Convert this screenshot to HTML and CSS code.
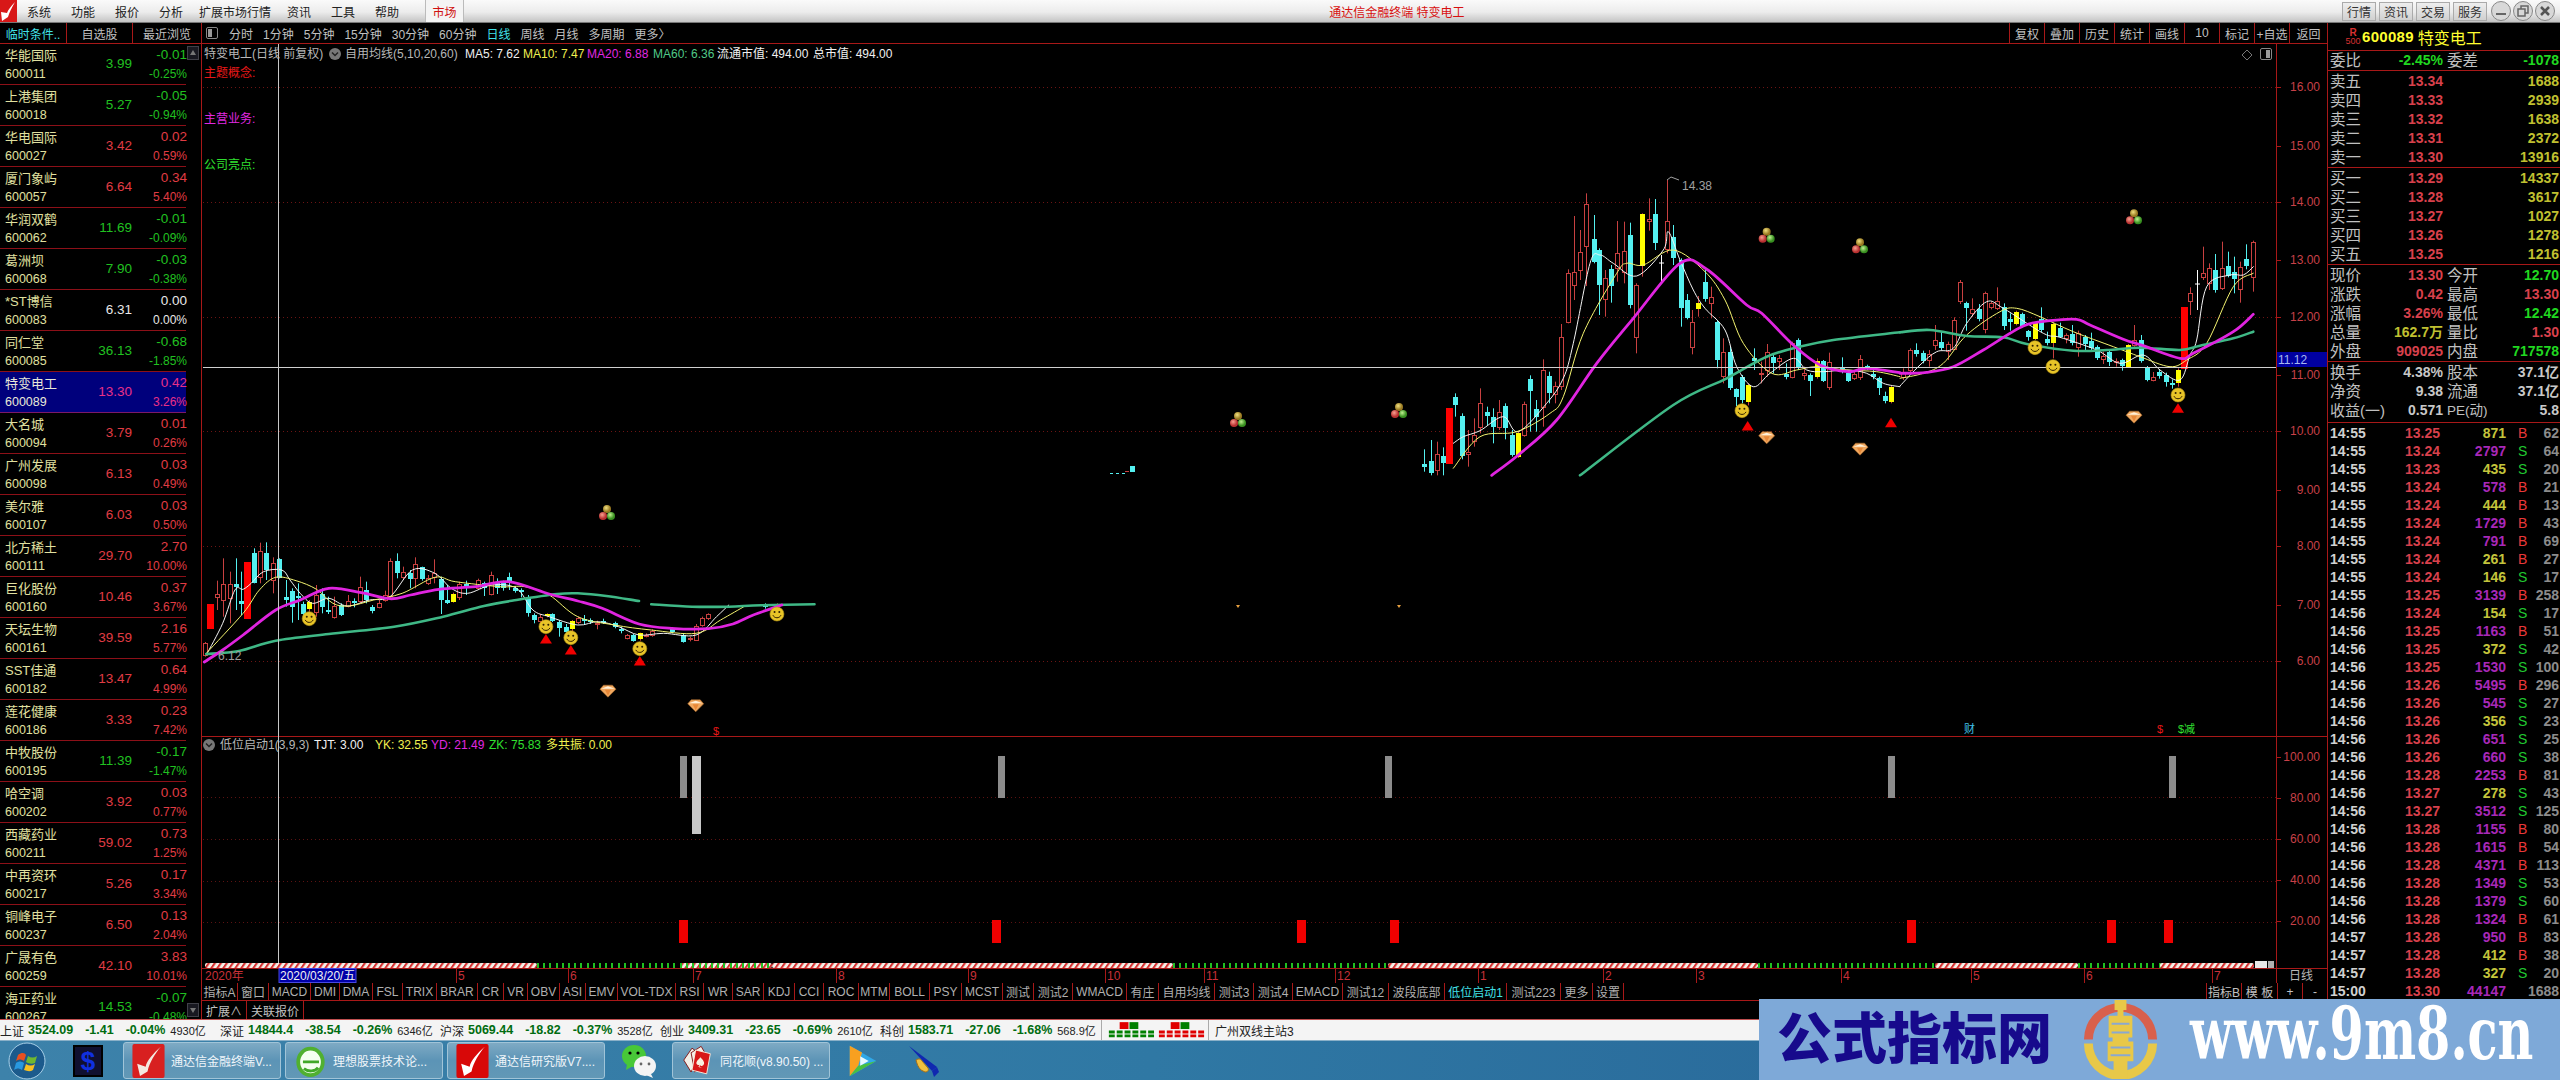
FILE: index.html
```html
<!DOCTYPE html>
<html lang="zh-CN">
<head>
<meta charset="utf-8">
<title>通达信金融终端 特变电工</title>
<link rel="stylesheet" href="styles.css">
</head>
<body>
<div class="app">
  <header class="titlebar">
    <svg class="logo" viewBox="0 0 17 22"><rect width="17" height="22" fill="#d81818"/><path d="M15 2 C11 6 8 10 7 13 L1 12 L2 21 L8 17 C9 13 12 7 15 2Z" fill="#fff"/></svg>
    <nav class="menu"><span>系统</span><span>功能</span><span>报价</span><span>分析</span><span>扩展市场行情</span><span>资讯</span><span>工具</span><span>帮助</span></nav>
    <span class="market-tab">市场</span>
    <span class="app-title">通达信金融终端 特变电工</span>
    <div class="title-right">
      <span class="tbtn">行情</span><span class="tbtn">资讯</span><span class="tbtn">交易</span><span class="tbtn">服务</span>
      <svg class="win" viewBox="0 0 66 22">
        <g fill="#d8d8d8" stroke="#888"><circle cx="10" cy="11" r="9.5"/><circle cx="32" cy="11" r="9.5"/><circle cx="54" cy="11" r="9.5"/></g>
        <path d="M5 14h10" stroke="#666" stroke-width="2"/>
        <path d="M27 9h7v7h-7zM30 9V6h7v7h-3" fill="none" stroke="#666" stroke-width="1.5"/>
        <path d="M50 7l8 8M58 7l-8 8" stroke="#555" stroke-width="2.5"/>
      </svg>
    </div>
  </header>

  <div class="main">
    <aside class="sidebar">
      <div class="side-tabs"><span class="on">临时条件..</span><span>自选股</span><span>最近浏览</span></div>
      <div class="side-body">
        <div class="stocks">
          <div class="st dn"><b>华能国际</b><i>600011</i><u>3.99</u><em>-0.01</em><s>-0.25%</s></div>
          <div class="st dn"><b>上港集团</b><i>600018</i><u>5.27</u><em>-0.05</em><s>-0.94%</s></div>
          <div class="st up"><b>华电国际</b><i>600027</i><u>3.42</u><em>0.02</em><s>0.59%</s></div>
          <div class="st up"><b>厦门象屿</b><i>600057</i><u>6.64</u><em>0.34</em><s>5.40%</s></div>
          <div class="st dn"><b>华润双鹤</b><i>600062</i><u>11.69</u><em>-0.01</em><s>-0.09%</s></div>
          <div class="st dn"><b>葛洲坝</b><i>600068</i><u>7.90</u><em>-0.03</em><s>-0.38%</s></div>
          <div class="st fl"><b>*ST博信</b><i>600083</i><u>6.31</u><em>0.00</em><s>0.00%</s></div>
          <div class="st dn"><b>同仁堂</b><i>600085</i><u>36.13</u><em>-0.68</em><s>-1.85%</s></div>
          <div class="st sel"><b>特变电工</b><i>600089</i><u>13.30</u><em>0.42</em><s>3.26%</s></div>
          <div class="st up"><b>大名城</b><i>600094</i><u>3.79</u><em>0.01</em><s>0.26%</s></div>
          <div class="st up"><b>广州发展</b><i>600098</i><u>6.13</u><em>0.03</em><s>0.49%</s></div>
          <div class="st up"><b>美尔雅</b><i>600107</i><u>6.03</u><em>0.03</em><s>0.50%</s></div>
          <div class="st up"><b>北方稀土</b><i>600111</i><u>29.70</u><em>2.70</em><s>10.00%</s></div>
          <div class="st up"><b>巨化股份</b><i>600160</i><u>10.46</u><em>0.37</em><s>3.67%</s></div>
          <div class="st up"><b>天坛生物</b><i>600161</i><u>39.59</u><em>2.16</em><s>5.77%</s></div>
          <div class="st up"><b>SST佳通</b><i>600182</i><u>13.47</u><em>0.64</em><s>4.99%</s></div>
          <div class="st up"><b>莲花健康</b><i>600186</i><u>3.33</u><em>0.23</em><s>7.42%</s></div>
          <div class="st dn"><b>中牧股份</b><i>600195</i><u>11.39</u><em>-0.17</em><s>-1.47%</s></div>
          <div class="st up"><b>哈空调</b><i>600202</i><u>3.92</u><em>0.03</em><s>0.77%</s></div>
          <div class="st up"><b>西藏药业</b><i>600211</i><u>59.02</u><em>0.73</em><s>1.25%</s></div>
          <div class="st up"><b>中再资环</b><i>600217</i><u>5.26</u><em>0.17</em><s>3.34%</s></div>
          <div class="st up"><b>铜峰电子</b><i>600237</i><u>6.50</u><em>0.13</em><s>2.04%</s></div>
          <div class="st up"><b>广晟有色</b><i>600259</i><u>42.10</u><em>3.83</em><s>10.01%</s></div>
          <div class="st dn"><b>海正药业</b><i>600267</i><u>14.53</u><em>-0.07</em><s>-0.48%</s></div>
        </div>
        <div class="scroll"><span class="sb-up"></span><span class="sb-down"></span></div>
      </div>
    </aside>

    <section class="center">
      <div class="toolbar">
        <svg class="tool-icon" viewBox="0 0 12 12"><rect x=".5" y=".5" width="11" height="11" rx="1.5" fill="none" stroke="#888"/><rect x="2" y="2" width="4" height="8" fill="#999"/></svg>
        <span class="per">分时</span><span class="per">1分钟</span><span class="per">5分钟</span><span class="per">15分钟</span><span class="per">30分钟</span><span class="per">60分钟</span><span class="per on">日线</span><span class="per">周线</span><span class="per">月线</span><span class="per">多周期</span><span class="per">更多〉</span>
        <div class="tools"><span>复权</span><span>叠加</span><span>历史</span><span>统计</span><span>画线</span><span>10</span><span>标记</span><span>+自选</span><span>返回</span></div>
      </div>

      <svg id="chart" class="chart" viewBox="202 44 2125 939" width="2125" height="939">
        <defs>
          <pattern id="candy" width="6" height="5" patternUnits="userSpaceOnUse" patternTransform="skewX(-35)"><rect width="6" height="5" fill="#f4f0e8"/><rect x="0" width="2.5" height="5" fill="#d83030"/></pattern>
          <radialGradient id="bY" cx=".4" cy=".35"><stop offset="0" stop-color="#f0e080"/><stop offset="1" stop-color="#987820"/></radialGradient>
          <radialGradient id="bR" cx=".4" cy=".35"><stop offset="0" stop-color="#f8a090"/><stop offset="1" stop-color="#b83030"/></radialGradient>
          <radialGradient id="bG" cx=".4" cy=".35"><stop offset="0" stop-color="#c0f090"/><stop offset="1" stop-color="#389020"/></radialGradient>
        </defs>
        <g id="grid"></g>
        <g id="candles"></g>
        <g id="lines"></g>
        <g id="marks"></g>

        <text class="t mut" x="204" y="54">特变电工(日线 前复权)</text>
        <circle cx="335" cy="54" r="6" fill="#777"/><path d="M332 52.5l3 3 3-3" fill="none" stroke="#222" stroke-width="1.5"/>
        <text class="t mut" x="345" y="54">自用均线(5,10,20,60)</text>
        <text class="t wht" x="465" y="54">MA5: 7.62</text>
        <text class="t yel" x="523" y="54">MA10: 7.47</text>
        <text class="t mag" x="587" y="54">MA20: 6.88</text>
        <text class="t grn" x="653" y="54">MA60: 6.36</text>
        <text class="t wht" x="717" y="54">流通市值: 494.00</text>
        <text class="t wht" x="813" y="54">总市值: 494.00</text>
        <text class="t red" x="204" y="73">主题概念:</text>
        <text class="t mag" x="204" y="119">主营业务:</text>
        <text class="t lgr" x="204" y="165">公司亮点:</text>
        <path d="M2247 50l5 5-5 5-5-5z" fill="none" stroke="#777"/>
        <rect x="2260.500" y="48.500" width="11" height="11" rx="1.500" fill="none" stroke="#888"/><rect x="2266" y="50" width="4" height="8" fill="#999"/>

        <text class="t gry" x="1682" y="186">14.38</text>
        <text class="t gry" x="218" y="656">6.12</text>

        <text class="t red mk" x="713" y="731">$</text>
        <text class="t cyn mk" x="1964" y="729">财</text>
        <text class="t red mk" x="2157" y="729">$</text>
        <text class="t lgr mk" x="2178" y="729">$减</text>

        <circle cx="209" cy="745" r="6" fill="#777"/><path d="M206 743.500l3 3 3-3" fill="none" stroke="#222" stroke-width="1.500"/>
        <text class="t mut" x="220" y="745">低位启动1(3,9,3)</text>
        <text class="t wht" x="314" y="745">TJT: 3.00</text>
        <text class="t yel" x="375" y="745">YK: 32.55</text>
        <text class="t mag" x="431" y="745">YD: 21.49</text>
        <text class="t lgr" x="489" y="745">ZK: 75.83</text>
        <text class="t yel" x="546" y="745">多共振: 0.00</text>

        <g class="ax">
          <text x="2320" y="87">16.00</text><text x="2320" y="146">15.00</text><text x="2320" y="202">14.00</text><text x="2320" y="260">13.00</text><text x="2320" y="317">12.00</text><text x="2320" y="375">11.00</text><text x="2320" y="431">10.00</text><text x="2320" y="490">9.00</text><text x="2320" y="546">8.00</text><text x="2320" y="605">7.00</text><text x="2320" y="661">6.00</text>
          <text x="2320" y="757">100.00</text><text x="2320" y="798">80.00</text><text x="2320" y="839">60.00</text><text x="2320" y="880">40.00</text><text x="2320" y="921">20.00</text>
        </g>
        <rect x="2277" y="352" width="50" height="15" fill="#0000a0"/>
        <text class="t blu" x="2278" y="360">11.12</text>

        <g class="dt">
          <text x="205" y="976">2020年</text>
          <text x="458" y="976">5</text><text x="570" y="976">6</text><text x="695" y="976">7</text><text x="838" y="976">8</text><text x="970" y="976">9</text><text x="1107" y="976">10</text><text x="1206" y="976">11</text><text x="1337" y="976">12</text><text x="1480" y="976">1</text><text x="1605" y="976">2</text><text x="1698" y="976">3</text><text x="1843" y="976">4</text><text x="1973" y="976">5</text><text x="2086" y="976">6</text><text x="2214" y="976">7</text>
        </g>
        <rect x="279" y="968.500" width="77" height="14" fill="#0000a8" stroke="#4848e0"/>
        <text class="t wht" x="280" y="976">2020/03/20/五</text>
        <text class="t mut dayl" x="2301" y="976">日线</text>
      </svg>

      <div class="tab-row">
        <div class="tabs">
          <span>指标A</span><span>窗口</span><span>MACD</span><span>DMI</span><span>DMA</span><span>FSL</span><span>TRIX</span><span>BRAR</span><span>CR</span><span>VR</span><span>OBV</span><span>ASI</span><span>EMV</span><span>VOL-TDX</span><span>RSI</span><span>WR</span><span>SAR</span><span>KDJ</span><span>CCI</span><span>ROC</span><span>MTM</span><span>BOLL</span><span>PSY</span><span>MCST</span><span>测试</span><span>测试2</span><span>WMACD</span><span>有庄</span><span>自用均线</span><span>测试3</span><span>测试4</span><span>EMACD</span><span>测试12</span><span>波段底部</span><span class="on">低位启动1</span><span>测试223</span><span>更多</span><span>设置</span>
        </div>
        <div class="tabs-end"><span class="w35">指标B</span><span class="w36">模 板</span><span class="w24">+</span><span class="w24">-</span></div>
      </div>
      <div class="tabs-b">
        <span>扩展∧</span><span>关联报价</span>
      </div>
    </section>

    <aside class="quote">
      <div class="q-head"><span class="badge"><b>R</b><i>500</i></span><span class="q-code">600089</span><span class="q-name">特变电工</span></div>
      <div class="q-sec s19">
        <div class="qr"><span>委比</span><b class="g">-2.45%</b><span>委差</span><b class="g">-1078</b></div>
      </div>
      <div class="q-sec">
        <div class="qr"><span>卖五</span><b class="r">13.34</b><b class="y c4">1688</b></div>
        <div class="qr"><span>卖四</span><b class="r">13.33</b><b class="y c4">2939</b></div>
        <div class="qr"><span>卖三</span><b class="r">13.32</b><b class="y c4">1638</b></div>
        <div class="qr"><span>卖二</span><b class="r">13.31</b><b class="y c4">2372</b></div>
        <div class="qr"><span>卖一</span><b class="r">13.30</b><b class="y c4">13916</b></div>
      </div>
      <div class="q-sec">
        <div class="qr"><span>买一</span><b class="r">13.29</b><b class="y c4">14337</b></div>
        <div class="qr"><span>买二</span><b class="r">13.28</b><b class="y c4">3617</b></div>
        <div class="qr"><span>买三</span><b class="r">13.27</b><b class="y c4">1027</b></div>
        <div class="qr"><span>买四</span><b class="r">13.26</b><b class="y c4">1278</b></div>
        <div class="qr"><span>买五</span><b class="r">13.25</b><b class="y c4">1216</b></div>
      </div>
      <div class="q-sec">
        <div class="qr"><span>现价</span><b class="r">13.30</b><span>今开</span><b class="g">12.70</b></div>
        <div class="qr"><span>涨跌</span><b class="r">0.42</b><span>最高</span><b class="r">13.30</b></div>
        <div class="qr"><span>涨幅</span><b class="r">3.26%</b><span>最低</span><b class="g">12.42</b></div>
        <div class="qr"><span>总量</span><b class="y">162.7万</b><span>量比</span><b class="r">1.30</b></div>
        <div class="qr"><span>外盘</span><b class="r">909025</b><span>内盘</span><b class="g">717578</b></div>
      </div>
      <div class="q-sec s3">
        <div class="qr"><span>换手</span><b class="w">4.38%</b><span>股本</span><b class="w">37.1亿</b></div>
        <div class="qr"><span>净资</span><b class="w">9.38</b><span>流通</span><b class="w">37.1亿</b></div>
        <div class="qr"><span class="nw">收益(一)</span><b class="w">0.571</b><span class="pe">PE(动)</span><b class="w">5.8</b></div>
      </div>
      <div class="trades">
        <div class="tr"><span>14:55</span><span>13.25</span><span class="py">871</span><span class="b">B</span><span>62</span></div>
        <div class="tr"><span>14:55</span><span>13.24</span><span class="pu">2797</span><span class="s">S</span><span>64</span></div>
        <div class="tr"><span>14:55</span><span>13.23</span><span class="py">435</span><span class="s">S</span><span>20</span></div>
        <div class="tr"><span>14:55</span><span>13.24</span><span class="pu">578</span><span class="b">B</span><span>21</span></div>
        <div class="tr"><span>14:55</span><span>13.24</span><span class="py">444</span><span class="b">B</span><span>13</span></div>
        <div class="tr"><span>14:55</span><span>13.24</span><span class="pu">1729</span><span class="b">B</span><span>43</span></div>
        <div class="tr"><span>14:55</span><span>13.24</span><span class="pu">791</span><span class="b">B</span><span>69</span></div>
        <div class="tr"><span>14:55</span><span>13.24</span><span class="py">261</span><span class="b">B</span><span>27</span></div>
        <div class="tr"><span>14:55</span><span>13.24</span><span class="py">146</span><span class="s">S</span><span>17</span></div>
        <div class="tr"><span>14:55</span><span>13.25</span><span class="pu">3139</span><span class="b">B</span><span>258</span></div>
        <div class="tr"><span>14:56</span><span>13.24</span><span class="py">154</span><span class="s">S</span><span>17</span></div>
        <div class="tr"><span>14:56</span><span>13.25</span><span class="pu">1163</span><span class="b">B</span><span>51</span></div>
        <div class="tr"><span>14:56</span><span>13.25</span><span class="py">372</span><span class="s">S</span><span>42</span></div>
        <div class="tr"><span>14:56</span><span>13.25</span><span class="pu">1530</span><span class="s">S</span><span>100</span></div>
        <div class="tr"><span>14:56</span><span>13.26</span><span class="pu">5495</span><span class="b">B</span><span>296</span></div>
        <div class="tr"><span>14:56</span><span>13.26</span><span class="pu">545</span><span class="s">S</span><span>27</span></div>
        <div class="tr"><span>14:56</span><span>13.26</span><span class="py">356</span><span class="s">S</span><span>23</span></div>
        <div class="tr"><span>14:56</span><span>13.26</span><span class="pu">651</span><span class="s">S</span><span>25</span></div>
        <div class="tr"><span>14:56</span><span>13.26</span><span class="pu">660</span><span class="s">S</span><span>38</span></div>
        <div class="tr"><span>14:56</span><span>13.28</span><span class="pu">2253</span><span class="b">B</span><span>81</span></div>
        <div class="tr"><span>14:56</span><span>13.27</span><span class="py">278</span><span class="s">S</span><span>43</span></div>
        <div class="tr"><span>14:56</span><span>13.27</span><span class="pu">3512</span><span class="s">S</span><span>125</span></div>
        <div class="tr"><span>14:56</span><span>13.28</span><span class="pu">1155</span><span class="b">B</span><span>80</span></div>
        <div class="tr"><span>14:56</span><span>13.28</span><span class="pu">1615</span><span class="b">B</span><span>54</span></div>
        <div class="tr"><span>14:56</span><span>13.28</span><span class="pu">4371</span><span class="b">B</span><span>113</span></div>
        <div class="tr"><span>14:56</span><span>13.28</span><span class="pu">1349</span><span class="s">S</span><span>53</span></div>
        <div class="tr"><span>14:56</span><span>13.28</span><span class="pu">1379</span><span class="s">S</span><span>60</span></div>
        <div class="tr"><span>14:56</span><span>13.28</span><span class="pu">1324</span><span class="b">B</span><span>61</span></div>
        <div class="tr"><span>14:57</span><span>13.28</span><span class="pu">950</span><span class="b">B</span><span>83</span></div>
        <div class="tr"><span>14:57</span><span>13.28</span><span class="py">412</span><span class="b">B</span><span>38</span></div>
        <div class="tr"><span>14:57</span><span>13.28</span><span class="py">327</span><span class="s">S</span><span>20</span></div>
        <div class="tr"><span>15:00</span><span>13.30</span><span class="pu">44147</span><span></span><span>1688</span></div>
      </div>
    </aside>
  </div>

  <footer class="status">
    <div class="idx"><span>上证</span><b>3524.09</b><b>-1.41</b><b>-0.04%</b><small>4930亿</small></div>
    <div class="idx"><span>深证</span><b>14844.4</b><b>-38.54</b><b>-0.26%</b><small>6346亿</small></div>
    <div class="idx"><span>沪深</span><b>5069.44</b><b>-18.82</b><b>-0.37%</b><small>3528亿</small></div>
    <div class="idx"><span>创业</span><b>3409.31</b><b>-23.65</b><b>-0.69%</b><small>2610亿</small></div>
    <div class="idx last"><span>科创</span><b>1583.71</b><b>-27.06</b><b>-1.68%</b><small>568.9亿</small></div>
    <svg class="signal" viewBox="0 0 108 20">
      <rect x="18" y="2" width="9" height="7" fill="#e00000"/><rect x="28" y="2" width="9" height="7" fill="#008000"/>
      <rect x="70" y="2" width="9" height="7" fill="#e00000"/><rect x="80" y="2" width="9" height="7" fill="#008000"/>
      <path d="M7 12h46M7 16h46" stroke="#008000" stroke-width="3" stroke-dasharray="6 2"/>
      <path d="M58 12h46M58 16h46" stroke="#e00000" stroke-width="3" stroke-dasharray="6 2"/>
    </svg>
    <span class="station">广州双线主站3</span>
  </footer>

  <div class="taskbar">
    <svg class="orb" viewBox="0 0 38 38">
      <circle cx="19" cy="19" r="18" fill="#1c5a8c" stroke="#a8d0e8"/>
      <path d="M10 13c4-3 7-2 8 0l-2 6c-3-2-5-2-8 0z" fill="#e85020"/><path d="M20 14c3 2 6 2 9 0l-2 7c-3 1-6 1-9-1z" fill="#70b830"/>
      <path d="M8 21c3-2 5-2 8 0l-2 7c-3-2-5-2-8 0z" fill="#2898e0"/><path d="M18 22c3 2 6 2 9 0l-2 6c-3 2-6 1-9 0z" fill="#f8c020"/>
    </svg>
    <svg class="dollar" viewBox="0 0 30 32"><rect x="1" y="1" width="28" height="30" fill="#101030" stroke="#000" stroke-width="2"/><text x="15" y="25" class="dollar-t" text-anchor="middle">$</text></svg>
    <div class="task w158">
      <svg class="ti" viewBox="0 0 34 36"><rect width="34" height="36" rx="2" fill="#d82020"/><path d="M30 3C22 10 15 18 14 24L5 21L8 34L16 29C18 20 24 10 30 3Z" fill="#f4e8e0"/></svg>
      <span>通达信金融终端V...</span>
    </div>
    <div class="task w158">
      <svg class="ti" viewBox="0 0 34 36"><ellipse cx="17" cy="19" rx="13" ry="14" fill="#f4fff0" stroke="#50b030" stroke-width="4"/><path d="M9 19h17M10 26c5 4 12 3 15-1" stroke="#40a828" stroke-width="3" fill="none"/></svg>
      <span>理想股票技术论...</span>
    </div>
    <div class="task w158">
      <svg class="ti" viewBox="0 0 34 36"><rect width="34" height="36" rx="2" fill="#d80808"/><path d="M30 3C22 10 15 18 14 24L5 21L8 34L16 29C18 20 24 10 30 3Z" fill="#fff"/></svg>
      <span>通达信研究版V7....</span>
    </div>
    <svg class="wx" viewBox="0 0 36 36"><ellipse cx="13" cy="13" rx="12" ry="11" fill="#48c838"/><path d="M6 21l-1 6 7-4z" fill="#48c838"/><ellipse cx="24" cy="23" rx="11" ry="10" fill="#f4f4f4"/><path d="M30 31l2 4-7-3z" fill="#f4f4f4"/><circle cx="9" cy="10" r="1.600"/><circle cx="17" cy="10" r="1.600"/><circle cx="20" cy="21" r="1.400" fill="#666"/><circle cx="28" cy="21" r="1.400" fill="#666"/></svg>
    <div class="task w158 t4">
      <svg class="ti" viewBox="0 0 36 36"><g stroke="#801010" fill="#f4f0e8"><path d="M3 17l9-13 8 6-9 20z"/><path d="M11 9l11-7 8 14-15 14z"/></g><path d="M16 6l16 4-4 22-16-4z" fill="#d81818" stroke="#f8f0e0"/><path d="M21 14c3 3 6 6 3 9-2 1-3 0-3-1l-1 3h3l-5-1c1 0 2 0 2-2-2 1-4-1-3-3 1-2 3-3 4-5z" fill="#f8f0e0"/></svg>
      <span>同花顺(v8.90.50) ...</span>
    </div>
    <svg class="tv" viewBox="0 0 34 38"><path d="M3 3L31 19L3 35Z" fill="#30a8e8"/><path d="M3 3L16 10L12 24L3 35Z" fill="#f8a020"/><path d="M3 35L12 24L31 19Z" fill="#48c040"/><path d="M14 14l9 5-9 5z" fill="#e8f8ff"/></svg>
    <svg class="pen" viewBox="0 0 32 32"><path d="M1 1L24 26L29 22Z" fill="#1028b0"/><path d="M8 15c3-2 5-1 6 1l6 7c1 2 0 4-3 4l-4-2c-3-3-4-6-5-10z" fill="#f0c040" stroke="#a87018"/><path d="M24 26l5-4 2 5-5 5z" fill="#1028b0"/></svg>
  </div>

  <aside class="promo">
    <span class="promo-cn">公式指标网</span>
    <svg class="promo-logo" viewBox="0 0 80 80">
      <path d="M3 40A37 37 0 0 1 77 40L68 40A28 28 0 0 0 12 40Z" fill="#d8604c"/>
      <path d="M3 44A37 37 0 0 0 77 44L68 44A28 28 0 0 1 12 44Z" fill="#e8c848"/>
      <path d="M34 0h12v10h-3v6h9v22h-4v4h5v20h-6v18h-14v-18h-6v-20h5v-4h-4v-22h9v-6h-3z" fill="#e8c848"/>
      <path d="M31 24h18M31 33h18M30 48h20M30 56h20" stroke="#8aa8d0" stroke-width="2"/>
    </svg>
    <span class="promo-en">www.9m8.cn</span>
  </aside>
</div>
<script src="script.js"></script>
</body>
</html>
```
FILE: styles.css
```css
*{box-sizing:border-box}
html,body{margin:0;padding:0;background:#000}
body{width:2560px;height:1080px;overflow:hidden;font-family:"Liberation Sans","Noto Sans CJK SC",sans-serif;font-size:12px;color:#c0c0c0}
.app{width:2560px;height:1080px;display:flex;flex-direction:column;position:relative;overflow:hidden}
b,i,u,em,s,small{font-style:normal;text-decoration:none;font-weight:normal}

/* title bar */
.titlebar{height:23px;flex:none;display:flex;align-items:center;background:linear-gradient(#fafafa,#ececec 55%,#c4c4c4);color:#222;border-bottom:1px solid #777}
.logo{width:17px;height:22px;flex:none}
.menu{display:flex;gap:20px;margin-left:10px}
.menu span:nth-child(5){margin:0 -4px}
.market-tab{margin-left:26px;width:39px;height:22px;display:flex;align-items:center;justify-content:center;background:#f4f4f4;color:#d01010;border-left:1px solid #bbb;border-right:1px solid #bbb}
.app-title{margin-left:865px;color:#d81010;white-space:nowrap}
.title-right{margin-left:auto;display:flex;align-items:center;gap:3px;padding-right:3px}
.tbtn{width:34px;height:19px;display:flex;align-items:center;justify-content:center;background:linear-gradient(#eee,#d0d0d0);border:1px solid #aaa;color:#333}
.win{width:66px;height:22px;margin-left:1px}

.main{height:996px;flex:none;display:flex;background:#000}

/* sidebar */
.sidebar{width:202px;flex:none;border-right:1px solid #a81818;display:flex;flex-direction:column}
.side-tabs{height:21px;flex:none;display:grid;grid-template-columns:67px 66px 68px;border-bottom:1px solid #a81818}
.side-tabs span{display:flex;align-items:center;justify-content:center;border-right:1px solid #a81818;white-space:nowrap}
.side-tabs span:last-child{border-right:0}
.side-tabs .on{color:#40e0e8}
.side-body{flex:1;display:flex;min-height:0;overflow:hidden}
.stocks{width:186px;flex:none}
.st{height:41px;display:grid;grid-template-columns:74px 53px 55px;grid-template-rows:21px 18px;padding-left:5px;border-bottom:1px solid #8c1018;align-items:center;position:relative}
.st b{grid-column:1;grid-row:1;font-size:13px;color:#e0e0a0;white-space:nowrap}
.st i{grid-column:1;grid-row:2;font-size:12.500px;color:#e0e0a0}
.st u{grid-column:2;grid-row:1 / span 2;font-size:13.500px;text-align:right}
.st em{grid-column:3;grid-row:1;font-size:13.500px;text-align:right}
.st s{grid-column:3;grid-row:2;font-size:12px;text-align:right}
.dn u,.dn em,.dn s{color:#20c020}
.up u,.up em,.up s{color:#e03c44}
.fl u,.fl em,.fl s{color:#e8e8e8}
.sel{background:#00007c;border-bottom-color:#7c1868}
.sel b,.sel i{color:#e8e8d8}
.sel u,.sel em,.sel s{color:#e83088}
.scroll{width:15px;flex:none;position:relative}
.sb-up,.sb-down{position:absolute;left:1px;width:12px;height:14px;background:#181820;border:1px solid #404048}
.sb-up{top:2px}
.sb-up:after{content:"";position:absolute;left:2px;top:3px;border:3px solid transparent;border-bottom:5px solid #777;border-top:0}
.sb-down{bottom:2px}
.sb-down:after{content:"";position:absolute;left:2px;top:4px;border:3px solid transparent;border-top:5px solid #777;border-bottom:0}

/* centre */
.center{width:2125px;flex:none;display:flex;flex-direction:column}
.toolbar{height:21px;flex:none;display:flex;align-items:center;border-bottom:1px solid #a81818;padding-left:4px}
.tool-icon{width:12px;height:12px;margin-right:11px}
.per{margin-right:10px;white-space:nowrap}
.per.on{color:#40e0e8}
.tools{margin-left:auto;display:flex;height:100%}
.tools span{width:35px;display:flex;align-items:center;justify-content:center;border-left:1px solid #a81818;white-space:nowrap}
.tools span:last-child{width:38px}
.chart{display:block;flex:none;background:#000}
.t{font-size:12px;dominant-baseline:central;fill:#c0c0c0}
.mut{fill:#b8b8b8}
.wht{fill:#f0f0f0}
.yel{fill:#f0f050}
.mag{fill:#e028e0}
.grn{fill:#50c888}
.lgr{fill:#30e030}
.red{fill:#e81818}
.gry{fill:#a0a0a0}
.cyn{fill:#40c0e8}
.blu{fill:#a8b8f0}
.mk{font-size:11px}
.ax text{font-size:12px;text-anchor:end;dominant-baseline:central;fill:#c84048}
.dt text{font-size:12px;dominant-baseline:central;fill:#c83038}
.dayl{text-anchor:middle}

.tab-row{height:18px;flex:none;display:flex;border-bottom:1px solid #a81818}
.tabs{display:grid;grid-template-columns:36px 31px 42px 29px 33px 30px 34px 41px 26px 24px 32px 26px 32px 58px 28px 29px 31px 31px 29px 35px 31px 40px 32px 41px 31px 39px 54px 32px 56px 39px 39px 50px 46px 56px 62px 54px 32px 31px;width:1423px}
.tabs span{display:flex;align-items:center;justify-content:center;border-right:1px solid #a81818;white-space:nowrap;color:#b0b0b0}
.tabs .on{color:#40e0e8}
.tabs-b{height:18px;flex:none;display:flex;align-items:center}
.tabs-b>span{padding:0 4px;border-right:1px solid #a81818;height:100%;display:flex;align-items:center}
.tabs-end{margin-left:auto;display:flex;height:100%}
.tabs-end span{display:flex;align-items:center;justify-content:center;border-left:1px solid #a81818;white-space:nowrap}
.w35{width:35px}
.w36{width:36px}
.w24{width:25px}

/* quote panel */
.quote{width:233px;flex:none;border-left:1px solid #a81818;display:flex;flex-direction:column;overflow:hidden}
.q-head{height:28px;flex:none;display:flex;align-items:center;border-bottom:1px solid #a81818;padding-left:17px}
.badge{width:16px;display:flex;flex-direction:column;align-items:center;line-height:9px;color:#d83030}
.badge b{font-weight:bold;font-size:10px}
.badge i{font-size:9px}
.q-code{color:#ffff30;font-weight:bold;font-size:15px;margin-left:1px;letter-spacing:.3px}
.q-name{color:#ffff30;font-size:16px;margin-left:4px}
.q-sec{height:97px;flex:none;border-bottom:1px solid #a81818;padding:1px 2px 0}
.q-sec.s19{height:20px;padding-top:0}
.q-sec.s3{height:61px}
.qr{height:19px;display:grid;grid-template-columns:40px 73px 44px 72px;align-items:center;line-height:19px}
.qr span{font-size:15.500px;color:#c0c0c0;white-space:nowrap}
.qr span:nth-child(3){padding-left:4px}
.qr b{font-size:14px;font-weight:bold;text-align:right;white-space:nowrap}
.qr .c4{grid-column:4}
.qr .nw{font-size:15px}
.qr .pe{font-size:13.500px}
.g{color:#20d820}
.r{color:#d8404c}
.y{color:#c0c030}
.w{color:#c8c8c8}
.trades{padding:1px 2px 0}
.tr{height:18px;display:grid;grid-template-columns:75px 36px 65px 22px 31px;align-items:center;font-size:14px;font-weight:bold;line-height:18px;color:#d8404c;white-space:nowrap}
.tr span:nth-child(1){color:#d0d0d0}
.tr span:nth-child(3){text-align:right}
.tr span:nth-child(4){padding-left:12px;font-weight:normal}
.tr span:nth-child(5){text-align:right;color:#8c8c8c}
.tr .py{color:#c4c43c}
.tr .pu{color:#a828b8}
.tr .b{color:#e83838}
.tr .s{color:#20c830}

/* status bar */
.status{height:21px;flex:none;display:flex;align-items:center;background:#f4f4f4;color:#222;border-top:1px solid #c05050;white-space:nowrap}
.idx{display:flex;align-items:center;width:220px;flex:none;overflow:hidden}
.idx.last{width:221px}
.idx span{width:24px;margin-right:4px}
.idx b{color:#006c10;font-weight:bold;font-size:12.500px;margin-right:12px}
.idx b:nth-of-type(3){margin-right:5px}
.idx small{font-size:11px}
.signal{width:108px;height:20px;flex:none;border-left:1px solid #aaa;border-right:1px solid #aaa}
.station{margin-left:6px}

/* taskbar */
.taskbar{height:40px;flex:none;display:flex;align-items:center;background:linear-gradient(90deg,#3d82aa,#2f78a4 45%,#2a6c9c 70%,#1f5f90);border-top:1px solid #8ab0c8}
.orb{width:38px;height:38px;margin-left:8px;flex:none}
.dollar{width:30px;height:32px;margin-left:27px;flex:none}
.dollar-t{font-size:26px;font-weight:bold;fill:#1030e0}
.task{height:37px;display:flex;align-items:center;gap:6px;padding-left:8px;margin-left:4px;background:linear-gradient(#7eaac4,#5c94b6 50%,#6298b6);border:1px solid #a0c4d8;border-radius:3px;color:#f0f6fa;white-space:nowrap;overflow:hidden;flex:none}
.w158{width:158px}
.dollar + .task{margin-left:20px}
.t4{margin-left:0}
.ti{width:33px;height:34px;flex:none}
.wx{width:36px;height:36px;margin:0 15px 0 16px;flex:none}
.tv{width:34px;height:36px;margin-left:16px;flex:none}
.pen{width:32px;height:32px;margin-left:28px;flex:none}

/* promo overlay */
.promo{position:absolute;left:1759px;top:999px;width:801px;height:81px;background:#7ea9d8}
.promo-cn{position:absolute;left:18px;top:5px;font-family:"Noto Sans CJK SC",sans-serif;font-weight:900;font-size:55px;line-height:61px;color:#170a8c;white-space:nowrap}
.promo-logo{position:absolute;left:322px;top:1px;width:79px;height:79px}
.promo-en{position:absolute;left:431px;top:6px;font-family:"DejaVu Serif",serif;font-weight:700;font-size:72px;line-height:58px;color:#fff;white-space:nowrap;transform:scaleX(.685);transform-origin:left center}
```
FILE: script.js
```js
(function () {
  var NS = 'http://www.w3.org/2000/svg';
  function el(tag, attrs, parent) {
    var n = document.createElementNS(NS, tag);
    for (var k in attrs) n.setAttribute(k, attrs[k]);
    if (parent) parent.appendChild(n);
    return n;
  }
  var grid = document.getElementById('grid');
  var candles = document.getElementById('candles');
  var lines = document.getElementById('lines');
  var marks = document.getElementById('marks');

  // zoom-space to page-space mappings
  var A = function (p) { return [190 + p[0] / 2.45, 520 + p[1] / 3]; };
  var B = function (p) { return [1400 + p[0] / 3, 170 + p[1] / 3]; };
  var C = function (p) { return [1900 + p[0] / 3, 200 + p[1] / 3]; };

  /* frame and grid */
  function hline(y, x1, x2, c, dash) {
    el('line', { x1: x1, x2: x2, y1: y + .5, y2: y + .5, stroke: c, 'stroke-dasharray': dash || '' }, grid);
  }
  function vline(x, y1, y2, c) {
    el('line', { x1: x + .5, x2: x + .5, y1: y1, y2: y2, stroke: c }, grid);
  }
  [87, 202, 317, 431, 661].forEach(function (y) { hline(y, 203, 2276, '#6c1414', '1 3'); });
  hline(546, 203, 640, '#6c1414', '1 3');
  [797, 839, 881, 922].forEach(function (y) { hline(y, 203, 2276, '#5c1212', '1 3'); });
  vline(2276, 44, 983, '#a81818');
  hline(736, 202, 2327, '#a81818');
  hline(968, 202, 2327, '#a81818');
  [87, 146, 202, 260, 317, 375, 431, 490, 546, 605, 661, 757, 798, 839, 880, 921].forEach(function (y) {
    hline(y, 2276, 2281, '#a81818');
  });
  [458, 570, 695, 838, 970, 1107, 1206, 1337, 1480, 1605, 1698, 1843, 1973, 2086, 2214].forEach(function (x) {
    vline(x - 2, 968, 983, '#a81818');
  });

  /* candles: type, x, top, bottom, high, low */
  var RED = '#c84040', CYAN = '#54f0f0', YEL = '#ffff00', SOLID = '#ff0000';
  function candle(map, d) {
    var t = d[0], a = map([d[1], d[2]]), b = map([d[1], d[3]]);
    var hi = d[4] === undefined ? a[1] - 2 : map([0, d[4]])[1];
    var lo = d[5] === undefined ? b[1] + 2 : map([0, d[5]])[1];
    var x = Math.round(a[0]), top = Math.round(a[1]), bot = Math.round(b[1]);
    var col = t === 'r' ? RED : t === 'c' ? CYAN : t === 'y' ? YEL : SOLID;
    var wickCol = t === 'y' ? RED : col;
    if (t === 'S') { el('rect', { x: x - 3, y: top, width: 7, height: bot - top, fill: SOLID }, candles); return; }
    el('line', { x1: x + .5, x2: x + .5, y1: hi, y2: lo, stroke: wickCol }, candles);
    if (t === 'r') el('rect', { x: x - 1.5, y: top + .5, width: 4, height: Math.max(1, bot - top), fill: '#000', stroke: RED }, candles);
    else el('rect', { x: x - 2, y: top, width: 5, height: Math.max(2, bot - top), fill: col }, candles);
  }
  var left = [
    ['r',36,368,405,366,410],['S',50,252,328],['r',65,222,232,182,270],['r',80,192,240,115,290],['r',97,192,235,155,310],
    ['c',112,193,200,115,270],['c',126,243,253,155,285],['S',140,127,296],['c',156,100,190,85,190],['r',172,92,170,68,190],
    ['c',187,100,150,67,180],['r',203,130,180,112,220],['c',217,118,175,115,175],['c',234,232,240,180,260],['c',249,212,262,205,308],
    ['c',264,228,233,190,300],['c',277,252,282,245,300],['y',292,245,267,240,275],['r',308,225,277,195,290],['c',323,222,262,205,280],
    ['c',339,270,273,230,282],['r',354,258,290,230,296],['c',371,256,284,250,288],['r',386,242,258,225,262],['c',401,242,250,235,262],
    ['r',416,202,242,170,248],['c',432,210,240,185,250],['c',447,262,272,255,280],['r',462,248,262,240,265],['r',477,225,240,212,245],
    ['r',491,122,228,115,235],['c',507,124,158,100,175],['r',522,156,172,140,178],['c',538,160,178,150,205],['r',552,132,174,112,205],
    ['c',569,142,178,140,182],['r',584,175,190,165,195],['r',598,158,172,118,190],['c',614,178,240,170,282],['c',630,240,248,195,252],
    ['y',645,222,245,218,248],['r',660,193,230,185,240],['c',676,192,205,182,225],['r',706,180,204,176,210],['c',721,190,205,185,228],
    ['r',737,165,222,155,226],['c',752,190,205,175,222],['c',767,190,205,182,212],['c',782,172,182,158,210],['c',797,205,213,198,218],
    ['c',812,210,216,205,232],['c',827,235,278,225,290],['c',843,285,300,280,310],['r',858,290,303,282,310],['y',875,283,288,280,292],
    ['c',888,283,302,280,306],['c',904,305,325,300,350],['c',920,322,335,312,345],['y',935,304,328,300,338],['r',950,295,305,290,312],
    ['c',966,296,300,285,312],['c',980,300,306,295,312],['r',996,308,312,302,328],['c',1011,302,306,296,312],['c',1041,310,320,305,325],
    ['c',1056,327,333,320,340],['r',1071,345,355,342,358],['c',1086,346,362,342,365],['y',1102,340,357,338,362],['r',1118,344,348,340,352],
    ['r',1133,333,345,328,350],['c',1180,328,335,322,340],['c',1209,345,365,340,368],['r',1224,355,358,350,364],['r',1240,318,360,312,362],
    ['r',1255,295,316,290,320],['r',1270,283,293,280,300],['c',1408,252,262,250,266],['y',1438,252,262,250,264]
  ];
  var mid = [
    ['c',73,883,890,838,905],['c',94,873,908,810,916],['r',112,853,900,815,916],['c',130,857,880,832,916],['S',148,714,882],
    ['c',166,682,705,670,740],['c',187,738,858,730,868],['r',205,845,852,780,890],['r',223,795,812,745,830],['r',241,700,772,655,790],
    ['c',262,727,737,710,765],['c',280,742,770,715,820],['r',298,727,772,690,780],['c',316,708,775,700,808],['c',337,795,855,780,860],
    ['y',355,790,860,785,864],['r',373,703,795,695,800],['c',391,628,662,616,785],['c',409,718,740,690,785],['r',430,600,712,568,770],
    ['c',448,618,670,605,700],['r',466,648,672,635,700],['r',484,500,648,462,660],['r',505,310,455,298,460],['r',523,305,345,138,390],
    ['r',541,245,300,180,330],['r',559,102,228,70,348],['c',581,208,275,135,280],['c',598,240,345,235,435],['r',616,325,388,300,440],
    ['c',634,297,347,285,398],['r',652,250,295,153,335],['r',673,243,305,155,340],['c',691,195,405,158,415],['r',709,346,500,340,550],
    ['y',727,133,288,130,320],['r',748,146,152,85,182],['c',766,132,220,87,240],['r',802,154,238,30,250],['c',820,200,265,165,285],
    ['c',842,270,413,265,470],['c',860,390,445,372,448],['r',877,455,530,420,553],['y',895,398,416,378,440],['c',916,336,387,300,395],
    ['r',934,380,400,350,445],['c',952,457,570,450,595],['r',970,545,618,505,640],['c',991,545,655,530,660],['c',1009,658,680,655,708],
    ['c',1027,622,690,615,700],['y',1045,645,695,640,706],['c',1063,565,572,535,600],['r',1084,610,612,575,640],['r',1102,545,600,522,620],
    ['c',1120,560,580,552,610],['r',1138,565,572,555,600],['c',1159,612,620,580,628],['r',1177,520,622,515,625],['c',1195,510,590,505,600],
    ['r',1213,610,615,590,630],['c',1231,615,632,610,678],['y',1252,572,622,565,626],['c',1270,572,632,570,636],['r',1288,575,652,548,660],
    ['c',1327,590,593,562,610],['c',1345,610,632,602,636],['r',1363,613,625,600,630],['r',1381,568,622,555,630],['c',1402,588,593,584,600],
    ['c',1420,612,620,600,628],['c',1438,625,655,620,675],['c',1456,678,693,665,700],['y',1474,652,697,648,700]
  ];
  var right = [
    ['r',10,515,530,505,540],['r',31,450,510,445,520],['c',49,450,462,430,470],['c',70,458,484,452,490],['r',88,462,480,450,500],
    ['r',106,420,435,375,450],['c',124,426,444,395,450],['r',145,433,452,425,480],['r',163,360,446,352,450],['r',181,246,302,240,312],
    ['c',199,310,325,305,392],['r',217,327,340,295,350],['c',238,328,358,312,364],['r',256,280,386,275,400],['r',274,310,322,305,328],
    ['r',292,304,325,262,330],['c',313,322,378,310,390],['c',331,358,366,340,392],['y',349,336,372,332,376],['c',367,342,378,338,382],
    ['c',385,394,410,390,422],['y',406,370,417,366,420],['c',424,358,390,322,396],['c',442,418,430,395,436],['y',460,372,428,368,475],
    ['c',481,385,410,368,414],['r',499,406,415,400,430],['c',517,402,430,375,436],['r',535,398,442,392,470],['c',556,410,432,405,450],
    ['c',574,422,444,398,450],['c',592,442,474,436,480],['r',610,468,478,455,492],['c',628,456,485,452,498],['r',649,482,486,475,500],
    ['c',667,480,497,476,512],['y',685,436,500,432,504],['r',703,420,435,375,440],['c',724,420,484,405,488],['c',742,504,540,498,544],
    ['r',760,530,540,516,544],['c',778,516,528,508,536],['c',799,526,545,518,560],['c',817,548,552,538,566],['y',835,510,548,505,560],
    ['S',853,321,508],['r',871,280,304,262,345],['r',910,220,230,140,240],['r',928,205,248,190,270],['c',946,210,270,162,278],
    ['r',967,205,265,125,270],['c',985,198,228,155,232],['c',1003,216,238,170,280],['r',1021,202,268,185,308],['c',1039,178,198,133,208],
    ['r',1060,127,230,122,275]
  ];
  left.forEach(function (d) { candle(A, d); });
  mid.forEach(function (d) { candle(B, d); });
  right.forEach(function (d) { candle(C, d); });
  // thin white crosses
  [[1661,255,283],[2197,270,310]].forEach(function (c) {
    el('line', { x1: c[0] + .5, x2: c[0] + .5, y1: c[1], y2: c[2], stroke: '#fff' }, candles);
    el('line', { x1: c[0] - 2, x2: c[0] + 3, y1: (c[1] + c[2]) / 2 - 6, y2: (c[1] + c[2]) / 2 - 6, stroke: '#fff' }, candles);
  });
  // the small isolated stub in the blank stretch
  el('rect', { x: 1130, y: 466, width: 5, height: 6, fill: CYAN }, candles);
  [1110, 1116, 1122].forEach(function (x) { el('line', { x1: x, x2: x + 3, y1: 473.5, y2: 473.5, stroke: CYAN }, candles); });
  el('line', { x1: 1125, x2: 1129, y1: 471.5, y2: 471.5, stroke: RED }, candles);

  /* moving averages, smoothed through the sampled points */
  function poly(map, pts, col, w) {
    var q = pts.map(map), d = 'M' + q[0][0].toFixed(1) + ' ' + q[0][1].toFixed(1);
    for (var i = 0; i < q.length - 1; i++) {
      var p0 = q[Math.max(i - 1, 0)], p1 = q[i], p2 = q[i + 1], p3 = q[Math.min(i + 2, q.length - 1)];
      d += 'C' + (p1[0] + (p2[0] - p0[0]) / 6).toFixed(1) + ' ' + (p1[1] + (p2[1] - p0[1]) / 6).toFixed(1) + ' ' +
        (p2[0] - (p3[0] - p1[0]) / 6).toFixed(1) + ' ' + (p2[1] - (p3[1] - p1[1]) / 6).toFixed(1) + ' ' +
        p2[0].toFixed(1) + ' ' + p2[1].toFixed(1);
    }
    el('path', { d: d, fill: 'none', stroke: col, 'stroke-width': w, 'stroke-linecap': 'round' }, lines);
  }
  var WH = '#f4f4f4', YL = '#f4f470', GN = '#3fb886', MG = '#e024e0';
  poly(A, [[40,405],[80,310],[110,210],[130,208],[150,190],[180,155],[225,150],[245,180],[270,220],[300,250],[340,235],[385,258],[440,240],[490,230],[545,150],[600,160],[640,205],[680,220],[740,195],[800,205],[840,270],[880,290],[950,315],[1000,305],[1050,320],[1100,345],[1160,340],[1240,345],[1290,290],[1320,255]], WH, 1);
  poly(A, [[40,400],[130,280],[170,210],[210,172],[260,182],[310,208],[350,250],[390,258],[450,240],[520,220],[600,172],[650,185],[760,200],[820,200],[880,225],[950,290],[1040,315],[1130,330],[1240,340],[1300,300],[1360,258]], YL, 1);
  poly(A, [[40,402],[120,393],[210,362],[340,342],[500,320],[620,290],[720,258],[800,240],[900,222],[950,220],[1020,228],[1100,243]], GN, 2.6);
  poly(A, [[1130,253],[1230,260],[1320,260],[1400,256],[1530,253]], GN, 2.6);
  poly(A, [[35,426],[80,390],[130,345],[210,270],[270,240],[340,205],[420,218],[490,236],[540,225],[610,208],[700,200],[780,185],[880,222],[950,243],[1010,265],[1100,312],[1180,325],[1270,326],[1330,312],[1380,285],[1450,255]], MG, 2.8);

  poly(B, [[160,820],[190,800],[240,782],[310,740],[355,785],[440,700],[490,625],[520,520],[570,280],[600,255],[640,280],[710,318],[790,240],[805,185],[840,270],[880,360],[915,415],[975,480],[1010,590],[1060,650],[1110,610],[1180,565],[1220,600],[1270,605],[1340,600],[1400,610],[1450,640],[1500,650]], WH, 1);
  poly(B, [[160,895],[240,800],[350,785],[450,730],[490,680],[550,490],[650,310],[680,280],[730,285],[820,240],[915,305],[975,390],[1030,520],[1115,610],[1190,600],[1250,590],[1340,600],[1430,605],[1500,620]], YL, 1);
  poly(B, [[540,916],[820,705],[980,625],[1100,560],[1200,530],[1300,510],[1500,487]], GN, 2.6);
  poly(B, [[275,916],[355,855],[470,750],[590,580],[700,445],[840,280],[920,298],[1040,405],[1085,430],[1180,525],[1260,585],[1345,605],[1400,595],[1500,608]], MG, 2.8);

  poly(C, [[0,558],[60,495],[110,455],[160,445],[200,370],[260,305],[310,325],[430,400],[480,412],[590,450],[660,490],[730,465],[780,510],[840,540],[870,465],[890,420],[920,260],[990,225],[1030,225],[1060,200]], WH, 1);
  poly(C, [[0,535],[70,520],[130,490],[200,405],[300,335],[350,325],[420,350],[520,395],[640,440],[720,470],[810,500],[860,480],[920,430],[1000,260],[1060,220]], YL, 1);
  poly(C, [[0,397],[90,390],[200,408],[310,412],[380,432],[520,452],[620,450],[720,443],[840,450],[900,437],[1000,415],[1060,395]], GN, 2.6);
  poly(C, [[0,520],[80,517],[160,500],[250,450],[370,378],[450,362],[530,358],[570,375],[670,418],[730,437],[840,475],[880,460],[1000,395],[1060,343]], MG, 2.8);

  /* crosshair */
  el('line', { x1: 203, x2: 2276, y1: 367.5, y2: 367.5, stroke: '#d0d0d0' }, lines);
  el('line', { x1: 278.5, x2: 278.5, y1: 44, y2: 968, stroke: '#c8c8c8' }, lines);

  /* 14.38 flag */
  el('path', { d: 'M1667 180l4-3 8 3', fill: 'none', stroke: '#a0a0a0' }, marks);

  /* markers */
  function smile(p) {
    var g = el('g', { transform: 'translate(' + p[0] + ' ' + p[1] + ')' }, marks);
    el('circle', { r: 7, fill: '#e8c428', stroke: '#b89818', 'stroke-width': .6 }, g);
    el('circle', { cx: -2.4, cy: -2, r: 1, fill: '#302000' }, g);
    el('circle', { cx: 2.4, cy: -2, r: 1, fill: '#302000' }, g);
    el('path', { d: 'M-4 1.2c1.500 3.400 6.500 3.400 8 0', fill: 'none', stroke: '#302000', 'stroke-width': 1 }, g);
  }
  function tri(p) { el('path', { d: 'M' + p[0] + ' ' + (p[1] - 5) + 'l6 9.500h-12z', fill: '#f00000' }, marks); }
  function gem(p) {
    var g = el('g', { transform: 'translate(' + p[0] + ' ' + p[1] + ')' }, marks);
    el('path', { d: 'M-4.500 -5.500h9l3.500 4L0 6.500-8 -1.500z', fill: '#f0a860', stroke: '#a86828', 'stroke-width': .6 }, g);
    el('path', { d: 'M-7 -2h14L0 -4.500z', fill: '#fff0d8' }, g);
    el('path', { d: 'M-3 -1L0 5l3-6', fill: '#e88838' }, g);
  }
  function balls(p) {
    var g = el('g', { transform: 'translate(' + p[0] + ' ' + p[1] + ')' }, marks);
    el('circle', { cx: 0, cy: -4, r: 4, fill: 'url(#bY)' }, g);
    el('circle', { cx: -4, cy: 3, r: 4, fill: 'url(#bR)' }, g);
    el('circle', { cx: 4, cy: 3, r: 4, fill: 'url(#bG)' }, g);
  }
  [[292,296],[872,320],[933,353],[1102,386],[1438,282]].map(A).forEach(smile);
  smile(B([1026,722]));
  [[405,443],[459,500],[834,585]].map(C).forEach(smile);
  [[872,357],[933,390],[1102,423]].map(A).forEach(tri);
  [[1043,768],[1473,758]].map(B).forEach(tri);
  tri(C([834,625]));
  [[1024,512],[1239,556]].map(A).forEach(gem);
  [[1100,802],[1380,836]].map(B).forEach(gem);
  gem(C([702,650]));
  [[1100,197],[1380,229]].map(B).forEach(balls);
  balls(C([702,52]));
  balls([607,513]); balls([1238,420]); balls([1399,411]);
  [[1238,606],[1399,606]].forEach(function (p) {
    el('path', { d: 'M' + (p[0] - 2) + ' ' + (p[1] - 1) + 'h4l-2 3z', fill: '#e8a040' }, marks);
  });

  /* sub-chart bars */
  [[680,756,7,42,'#8c8c8c'],[692,756,9,78,'#c8c8c8'],[998,756,7,42,'#8c8c8c'],[1385,756,7,42,'#8c8c8c'],[1888,756,7,42,'#8c8c8c'],[2169,756,7,42,'#8c8c8c']].forEach(function (b) {
    el('rect', { x: b[0], y: b[1], width: b[2], height: b[3], fill: b[4] }, marks);
  });
  [679, 992, 1297, 1390, 1907, 2107, 2164].forEach(function (x) {
    el('rect', { x: x, y: 920, width: 9, height: 23, fill: '#f00000' }, marks);
  });

  /* bottom signal strip */
  function candy(x1, x2) { el('rect', { x: x1, y: 963, width: x2 - x1, height: 5, rx: 2, fill: 'url(#candy)' }, marks); }
  function dots(x1, x2) {
    for (var x = x1; x < x2; x += 6.2) el('rect', { x: Math.round(x), y: 963, width: 2, height: 5, fill: '#20c020' }, marks);
  }
  candy(205, 537); dots(537, 772); candy(680, 772); dots(680, 772);
  candy(772, 1173); dots(1173, 1388); candy(1388, 1758); dots(1758, 1935); candy(1935, 2078); dots(2078, 2160); candy(2160, 2254);
  el('rect', { x: 2255, y: 961, width: 12, height: 7, fill: '#e8e8e8' }, marks);
  el('rect', { x: 2268, y: 961, width: 6, height: 7, fill: '#b0b0b0' }, marks);
})();
```
